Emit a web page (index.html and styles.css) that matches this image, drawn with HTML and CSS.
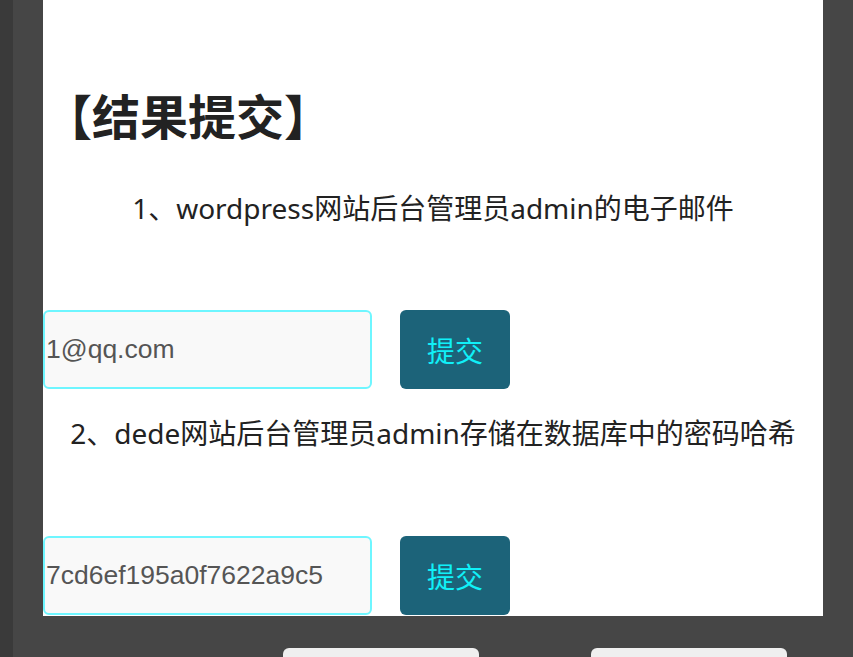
FILE: index.html
```html
<!DOCTYPE html>
<html lang="zh-CN">
<head>
<meta charset="utf-8">
<title>结果提交</title>
<link rel="stylesheet" href="styles.css">
</head>
<body>
<div class="page">
  <div class="strip"></div>
  <div class="main">
    <div class="panel">
      <h2 class="title">【结果提交】</h2>
      <p class="question">1、wordpress网站后台管理员admin的电子邮件</p>
      <div class="answer-row">
        <input class="answer" type="text" value="1@qq.com">
        <button class="submit">提交</button>
      </div>
      <p class="question q2">2、dede网站后台管理员admin存储在数据库中的密码哈希</p>
      <div class="answer-row">
        <input class="answer" type="text" value="7cd6ef195a0f7622a9c5">
        <button class="submit">提交</button>
      </div>
    </div>
    <div class="footer">
      <div class="foot-btn"></div>
      <div class="foot-btn"></div>
    </div>
  </div>
</div>
</body>
</html>
```
FILE: styles.css
```css
html, body {
  margin: 0;
  padding: 0;
  height: 100%;
  overflow: hidden;
  background: #464646;
}
.page {
  display: flex;
  height: 657px;
}
.strip {
  width: 13px;
  background: #3a3a3a;
  flex: none;
}
.main {
  padding-left: 30px;
  width: 780px;
}
.panel {
  width: 780px;
  height: 616px;
  background: #ffffff;
  overflow: hidden;
  font-family: "Noto Sans", "Noto Sans CJK SC", sans-serif;
  color: #222222;
}
.title {
  margin: 84px 0 0 0;
  padding-left: 1px;
  font-size: 48px;
  line-height: 60px;
  font-weight: 700;
  font-family: "Noto Sans CJK SC", sans-serif;
}
.question {
  margin: 46px 0 0 0;
  font-size: 28px;
  line-height: 36px;
  text-align: center;
  letter-spacing: 0;
}
.q2 {
  margin-top: 26px;
}
.answer-row {
  display: flex;
  align-items: center;
  gap: 28px;
  margin-top: 84px;
}
.q2 + .answer-row {
  margin-top: 85px;
}
.answer {
  box-sizing: border-box;
  width: 329px;
  height: 79px;
  margin: 0;
  padding: 0 1px;
  border: 2px solid #6ef6ff;
  border-radius: 6px;
  background: #f9f9f9;
  font-family: "Liberation Sans", Arial, sans-serif;
  font-size: 26.5px;
  color: #555555;
  outline: none;
}
.submit {
  width: 110px;
  height: 79px;
  border: none;
  border-radius: 6px;
  background: #1c6379;
  color: #10f0f8;
  font-family: "Noto Sans CJK SC", sans-serif;
  font-size: 28px;
  padding: 0;
}
.footer {
  display: flex;
  gap: 112px;
  padding: 32px 0 0 240px;
}
.foot-btn {
  width: 196px;
  height: 20px;
  background: #efefef;
  border-radius: 6px 6px 0 0;
}
```
